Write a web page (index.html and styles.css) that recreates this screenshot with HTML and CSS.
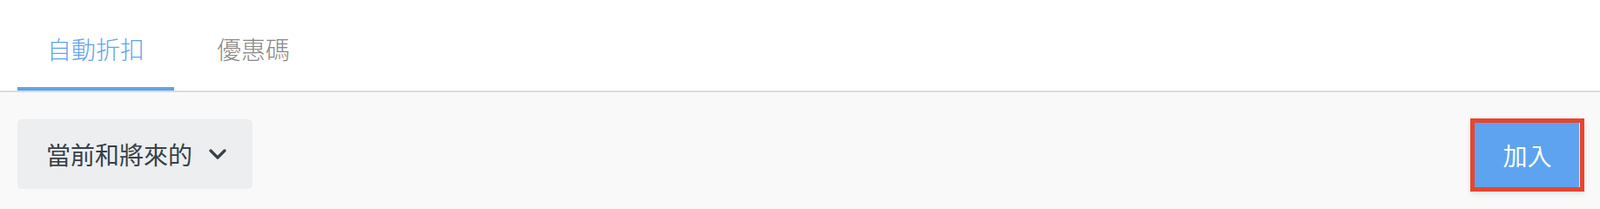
FILE: index.html
```html
<!DOCTYPE html>
<html lang="zh-Hant">
<head>
<meta charset="utf-8">
<title>折扣</title>
<link rel="stylesheet" href="styles.css">
</head>
<body>
<div class="page">
  <nav class="tabs">
    <a class="tab tab-active">自動折扣</a>
    <a class="tab">優惠碼</a>
  </nav>
  <div class="toolbar">
    <button class="filter" type="button">
      <span class="filter-label">當前和將來的</span>
      <svg class="chevron" viewBox="0 0 20 12" width="20" height="12" aria-hidden="true">
        <path d="M2 2 L10 10 L18 2" fill="none" stroke="#36414a" stroke-width="3.2" stroke-linecap="round" stroke-linejoin="round"/>
      </svg>
    </button>
    <button class="add" type="button">加入</button>
  </div>
</div>
</body>
</html>
```

FILE: styles.css
```css
html, body {
  margin: 0;
  padding: 0;
  background: #f9f9f9;
}

body {
  font-family: "Noto Sans CJK TC", "Noto Sans", sans-serif;
}

.page {
  width: 1838px;
  height: 232px;
  overflow: hidden;
}

.tabs {
  display: flex;
  gap: 15px;
  padding: 0 20px;
  background: #ffffff;
  border-bottom: 2px solid #dcdcdc;
}

.tab {
  display: block;
  padding: 38px 34px 26px;
  font-size: 28px;
  font-weight: 300;
  line-height: 36px;
  color: #888888;
  border-bottom: 4px solid transparent;
  cursor: pointer;
}

.tab-active {
  color: #5ea3ef;
  border-bottom-color: #5ea3ef;
}

.toolbar {
  display: flex;
  align-items: flex-start;
  justify-content: space-between;
  padding: 30px 18px 0 20px;
}

.filter {
  display: flex;
  align-items: center;
  gap: 19px;
  width: 270px;
  height: 80px;
  margin-top: 1px;
  padding: 0 0 0 33px;
  border: none;
  border-radius: 5px;
  background: #eceef0;
  font-family: inherit;
  cursor: pointer;
}

.filter-label {
  font-size: 28px;
  line-height: 36px;
  font-weight: 400;
  color: #36414a;
}

.chevron {
  display: block;
}

.add {
  width: 131px;
  height: 84px;
  border: 5px solid #e8452c;
  background: #5ea3ef;
  box-shadow: inset -1px 0 0 #dce9f7, 0 3px 6px rgba(0, 0, 0, 0.08);
  color: #ffffff;
  font-family: inherit;
  font-size: 28px;
  line-height: 36px;
  padding: 0;
  cursor: pointer;
}
```
